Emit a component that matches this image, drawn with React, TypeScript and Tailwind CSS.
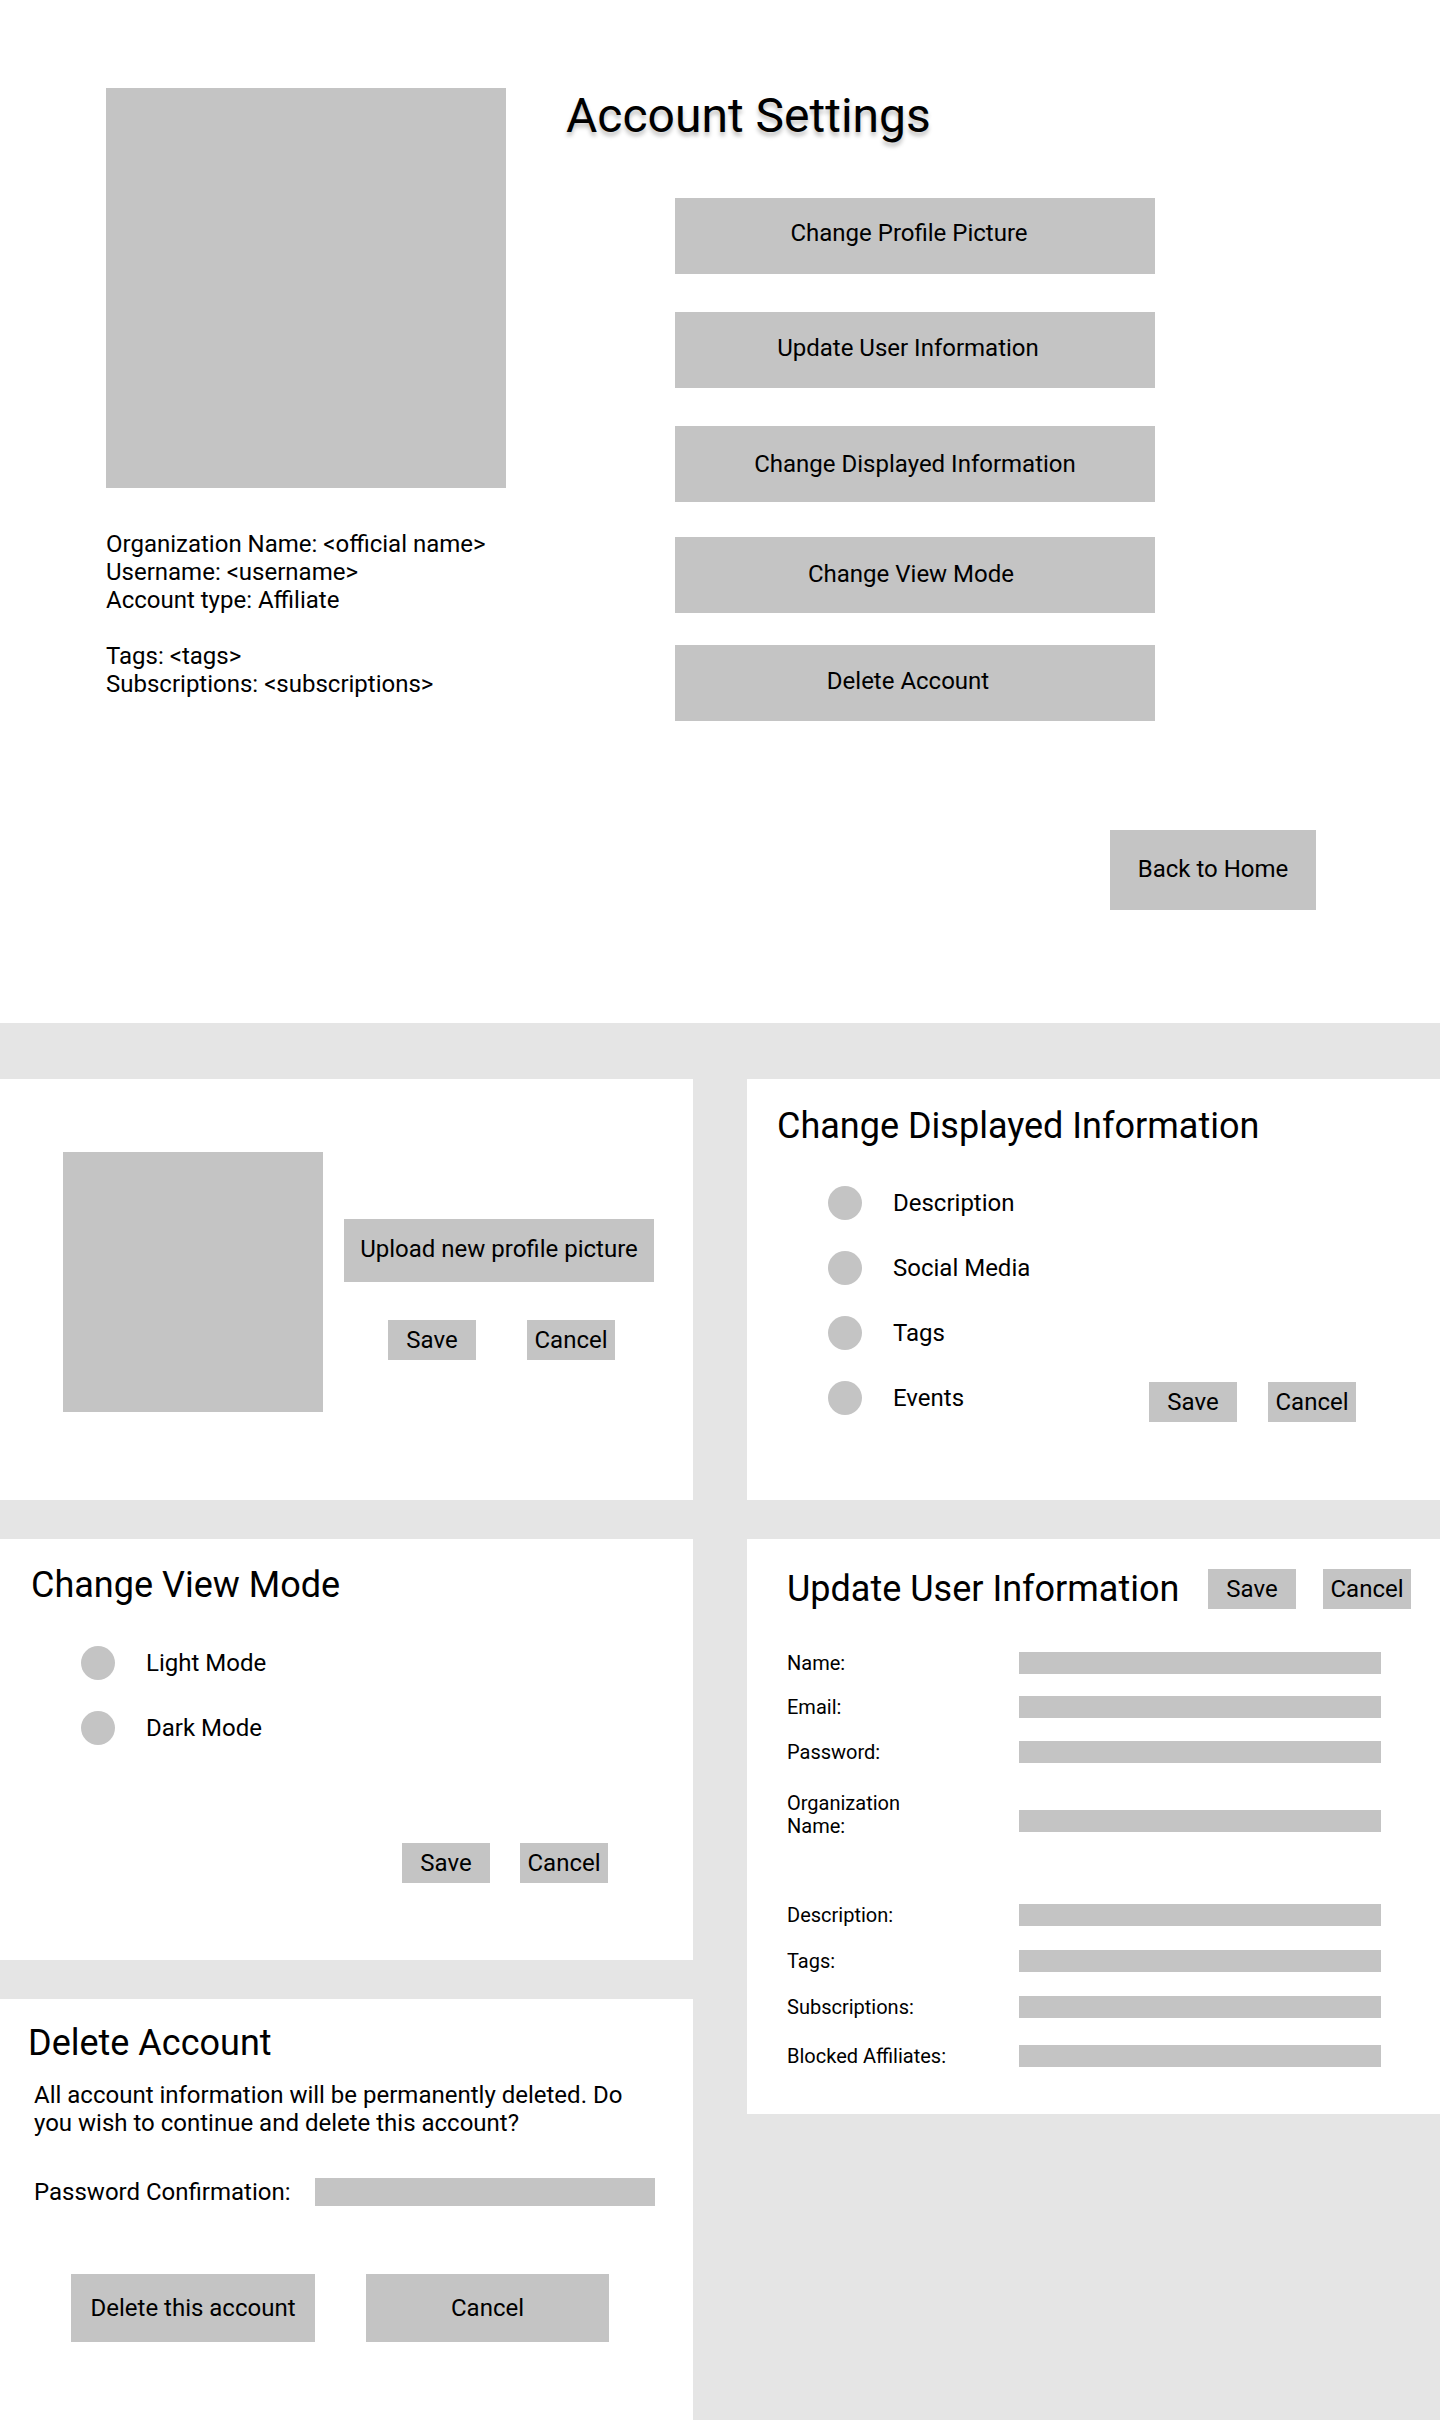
const mainActions = [
  { label: "Change Profile Picture", mt: "mt-[54px]", shift: "pr-[12px] pb-[6px]" },
  { label: "Update User Information", mt: "mt-[38px]", shift: "pr-[14px] pb-[5px]" },
  { label: "Change Displayed Information", mt: "mt-[38px]", shift: "pb-[1px]" },
  { label: "Change View Mode", mt: "mt-[35px]", shift: "pr-[8px] pb-[3px]" },
  { label: "Delete Account", mt: "mt-[32px]", shift: "pr-[14px] pb-[5px]" },
];

const displayedOptions = ["Description", "Social Media", "Tags"];

const userFields = [
  { label: "Name:", mt: "mt-[42px]" },
  { label: "Email:", mt: "mt-[22px]" },
  { label: "Password:", mt: "mt-[23px]" },
];

const moreFields = [
  { label: "Description:", mt: "mt-[66px]" },
  { label: "Tags:", mt: "mt-[24px]" },
  { label: "Subscriptions:", mt: "mt-[24px]" },
  { label: "Blocked Affiliates:", mt: "mt-[27px]" },
];

function SmallButton({ children }: { children: string }) {
  return (
    <button className="flex h-[40px] w-[88px] items-center justify-center bg-[#c4c4c4] text-[24px] leading-none text-black">
      {children}
    </button>
  );
}

function Radio() {
  return <span className="block h-[34px] w-[34px] shrink-0 rounded-full bg-[#c4c4c4]" />;
}

function Overview() {
  return (
    <section className="flex h-[1023px] bg-white pl-[106px] pt-[88px]">
      <div className="w-[400px] shrink-0">
        <div className="h-[400px] w-[400px] bg-[#c4c4c4]" />
        <div className="mt-[42px] text-[24px] leading-[28px] text-black">
          <p>Organization Name: &lt;official name&gt;</p>
          <p>Username: &lt;username&gt;</p>
          <p>Account type: Affiliate</p>
          <p className="mt-[28px]">Tags: &lt;tags&gt;</p>
          <p>Subscriptions: &lt;subscriptions&gt;</p>
        </div>
      </div>
      <div className="ml-[60px] flex flex-col">
        <h1 className="text-[48px] leading-[56px] text-black [text-shadow:0_4px_4px_rgba(0,0,0,0.25)]">
          Account Settings
        </h1>
        <div className="ml-[109px] flex flex-col">
          {mainActions.map((a) => (
            <button
              key={a.label}
              className={`${a.mt} ${a.shift} flex h-[76px] w-[480px] items-center justify-center bg-[#c4c4c4] text-[24px] text-black`}
            >
              {a.label}
            </button>
          ))}
        </div>
        <button className="ml-[544px] mt-[109px] flex h-[80px] w-[206px] items-center justify-center bg-[#c4c4c4] pb-[2px] text-[24px] text-black">
          Back to Home
        </button>
      </div>
    </section>
  );
}

function PicturePanel() {
  return (
    <div className="flex h-[421px] bg-white pl-[63px] pt-[73px]">
      <div className="h-[260px] w-[260px] shrink-0 bg-[#c4c4c4]" />
      <div className="ml-[21px] flex flex-col">
        <button className="mt-[67px] flex h-[63px] w-[310px] items-center justify-center bg-[#c4c4c4] pb-[3px] text-[24px] text-black">
          Upload new profile picture
        </button>
        <div className="ml-[44px] mt-[38px] flex gap-[51px]">
          <SmallButton>Save</SmallButton>
          <SmallButton>Cancel</SmallButton>
        </div>
      </div>
    </div>
  );
}

function DisplayedPanel() {
  return (
    <div className="h-[421px] bg-white pl-[30px] pt-[26px]">
      <h2 className="text-[36px] leading-[42px] text-black">Change Displayed Information</h2>
      <div className="ml-[51px] mt-[39px] flex flex-col gap-[31px]">
        {displayedOptions.map((o) => (
          <div key={o} className="flex h-[34px] items-center">
            <Radio />
            <span className="ml-[31px] text-[24px] text-black">{o}</span>
          </div>
        ))}
        <div className="flex h-[34px] items-center">
          <Radio />
          <span className="ml-[31px] w-[256px] text-[24px] text-black">Events</span>
          <div className="mt-[8px] flex gap-[31px]">
            <SmallButton>Save</SmallButton>
            <SmallButton>Cancel</SmallButton>
          </div>
        </div>
      </div>
    </div>
  );
}

function ViewModePanel() {
  return (
    <div className="h-[421px] bg-white pl-[31px] pt-[25px]">
      <h2 className="text-[36px] leading-[42px] text-black">Change View Mode</h2>
      <div className="ml-[50px] mt-[40px] flex flex-col gap-[31px]">
        {["Light Mode", "Dark Mode"].map((m) => (
          <div key={m} className="flex h-[34px] items-center">
            <Radio />
            <span className="ml-[31px] text-[24px] text-black">{m}</span>
          </div>
        ))}
      </div>
      <div className="ml-[371px] mt-[98px] flex gap-[30px]">
        <SmallButton>Save</SmallButton>
        <SmallButton>Cancel</SmallButton>
      </div>
    </div>
  );
}

function DeletePanel() {
  return (
    <div className="h-[421px] bg-white pl-[28px] pt-[23px]">
      <h2 className="text-[36px] leading-[42px] text-black">Delete Account</h2>
      <p className="ml-[6px] mt-[17px] w-[600px] text-[24px] leading-[28px] text-black">
        All account information will be permanently deleted. Do you wish to continue and delete this account?
      </p>
      <div className="ml-[6px] mt-[41px] flex items-center">
        <span className="w-[281px] text-[24px] leading-[28px] text-black">Password Confirmation:</span>
        <div className="h-[28px] w-[340px] bg-[#c4c4c4]" />
      </div>
      <div className="ml-[43px] mt-[68px] flex gap-[51px]">
        <button className="flex h-[68px] w-[244px] items-center justify-center bg-[#c4c4c4] text-[24px] text-black">
          Delete this account
        </button>
        <button className="flex h-[68px] w-[243px] items-center justify-center bg-[#c4c4c4] text-[24px] text-black">
          Cancel
        </button>
      </div>
    </div>
  );
}

function FieldRow({ label, mt }: { label: string; mt: string }) {
  return (
    <div className={`${mt} flex h-[22px] items-center`}>
      <span className="w-[232px] text-[20px] leading-[23px] text-black">{label}</span>
      <div className="h-[22px] w-[362px] bg-[#c4c4c4]" />
    </div>
  );
}

function UserInfoPanel() {
  return (
    <div className="h-[575px] bg-white pl-[40px] pt-[29px]">
      <div className="flex items-center">
        <h2 className="w-[421px] text-[36px] leading-[42px] text-black">Update User Information</h2>
        <div className="flex gap-[27px]">
          <SmallButton>Save</SmallButton>
          <SmallButton>Cancel</SmallButton>
        </div>
      </div>
      {userFields.map((f) => (
        <FieldRow key={f.label} {...f} />
      ))}
      <div className="mt-[29px] flex items-start">
        <span className="w-[232px] text-[20px] leading-[23px] text-black">
          Organization
          <br />
          Name:
        </span>
        <div className="mt-[18px] h-[22px] w-[362px] bg-[#c4c4c4]" />
      </div>
      {moreFields.map((f) => (
        <FieldRow key={f.label} {...f} />
      ))}
    </div>
  );
}

export default function App() {
  return (
    <div className="w-[1440px] font-['Roboto',sans-serif]">
      <Overview />
      <section className="h-[1397px] bg-[#e5e5e5] pt-[56px]">
        <div className="grid grid-cols-2 gap-x-[54px]">
          <PicturePanel />
          <DisplayedPanel />
        </div>
        <div className="mt-[39px] grid grid-cols-2 items-start gap-x-[54px]">
          <div className="flex flex-col gap-[39px]">
            <ViewModePanel />
            <DeletePanel />
          </div>
          <UserInfoPanel />
        </div>
      </section>
    </div>
  );
}
